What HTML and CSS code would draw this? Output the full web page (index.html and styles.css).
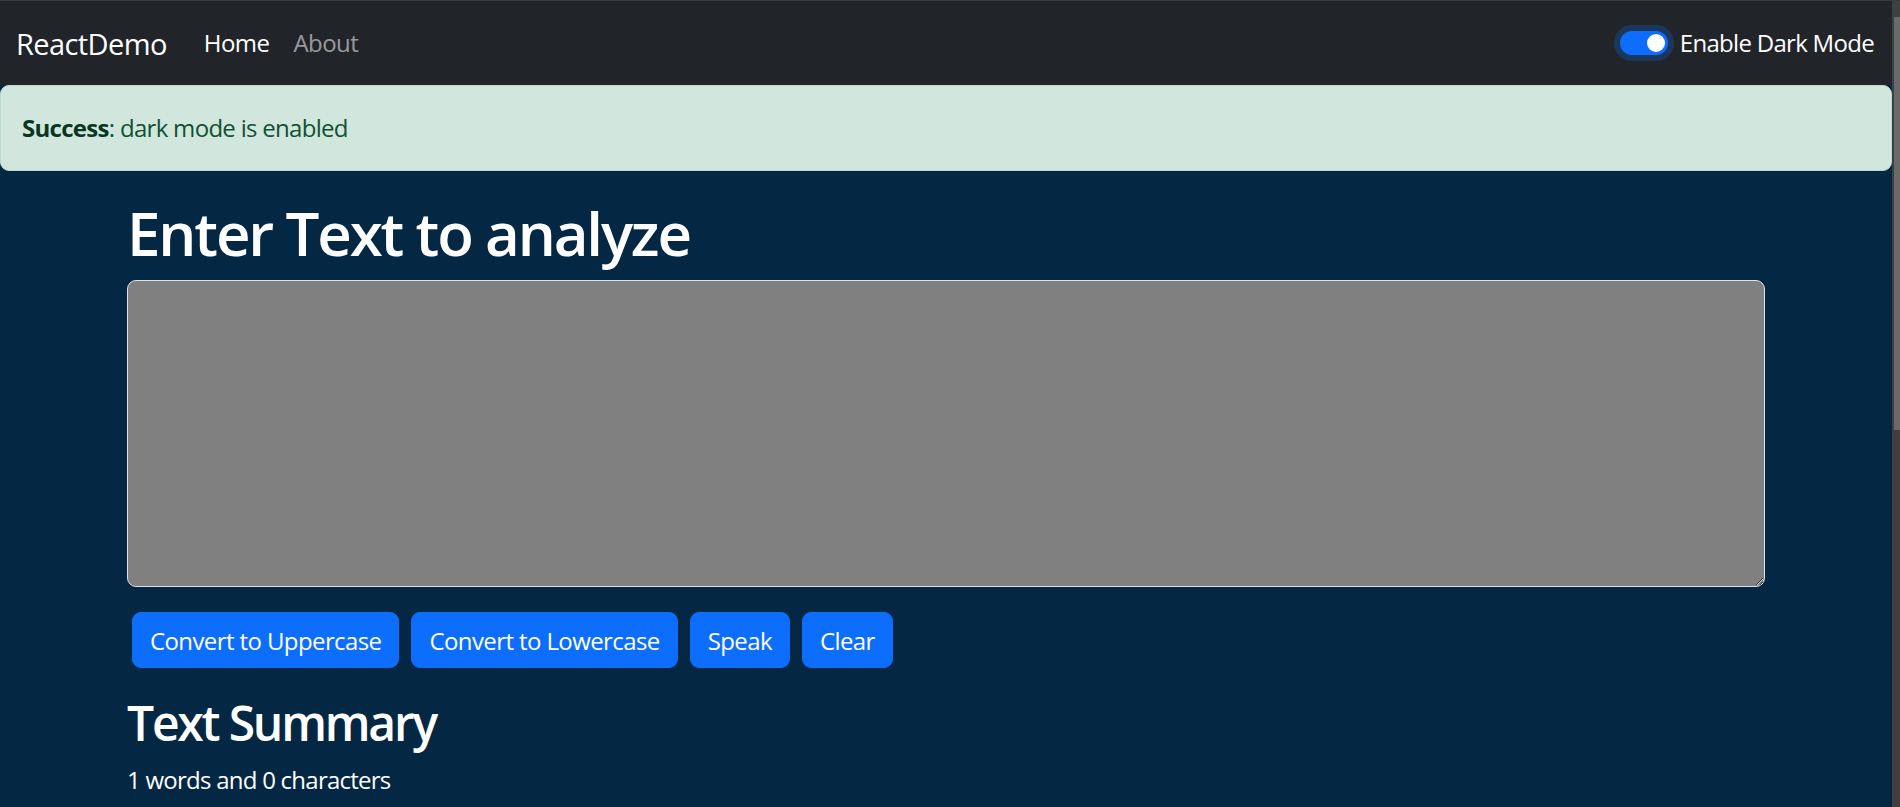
FILE: index.html
```html
<!DOCTYPE html>
<html lang="en">
<head>
<meta charset="utf-8">
<title>ReactDemo</title>
<link rel="stylesheet" href="styles.css">
</head>
<body>
<div class="page">
  <nav class="navbar">
    <a class="brand" href="#">ReactDemo</a>
    <ul class="nav-links">
      <li><a class="nav-link active" href="#">Home</a></li>
      <li><a class="nav-link" href="#">About</a></li>
    </ul>
    <label class="switch">
      <span class="switch-track"><span class="switch-knob"></span></span>
      <span class="switch-label">Enable Dark Mode</span>
    </label>
  </nav>
  <div class="alert"><strong>Success</strong>: dark mode is enabled</div>
  <div class="container main">
    <h1 class="title">Enter Text to analyze</h1>
    <textarea class="textbox" rows="8"></textarea>
    <div class="buttons">
      <button class="btn">Convert to Uppercase</button>
      <button class="btn">Convert to Lowercase</button>
      <button class="btn">Speak</button>
      <button class="btn">Clear</button>
    </div>
  </div>
  <div class="container summary">
    <h2 class="subtitle">Text Summary</h2>
    <p class="stats">1 words and 0 characters</p>
  </div>
</div>
<div class="scrollbar"><div class="scroll-arrow"></div><div class="scroll-thumb"></div></div>
</body>
</html>
```

FILE: styles.css
```css
html, body {
  margin: 0;
  height: 100%;
}
body {
  display: flex;
  background: #042743;
  font-family: "Open Sans", "Noto Sans", sans-serif;
  font-size: 24px;
  color: #fff;
  overflow: hidden;
  border-top: 1px solid #3a3a3a;
  box-sizing: border-box;
}
.page {
  flex: 1;
  min-width: 0;
}
.scrollbar {
  width: 8px;
  background: #3f3f3f;
  display: flex;
  flex-direction: column;
}
.scroll-arrow {
  height: 16px;
}
.scroll-thumb {
  height: 413px;
  margin-left: 2px;
  background: #6a6a6a;
}

/* navbar */
.navbar {
  display: flex;
  align-items: center;
  height: 84px;
  padding: 0 18px 0 16px;
  background: #212529;
  box-sizing: border-box;
}
.brand {
  font-size: 29px;
  color: #fff;
  text-decoration: none;
  margin-right: 25px;
  line-height: 45px;
  letter-spacing: -0.6px;
}
.nav-links {
  display: flex;
  list-style: none;
  margin: 0;
  padding: 0;
  flex: 1;
}
.nav-link {
  display: block;
  padding: 12px 12px;
  color: rgba(255, 255, 255, 0.55);
  text-decoration: none;
  line-height: 36px;
  letter-spacing: -0.55px;
}
.nav-link.active {
  color: #fff;
}
.switch {
  display: flex;
  align-items: center;
  gap: 12px;
}
.switch-track {
  width: 48px;
  height: 24px;
  border-radius: 12px;
  background: #0d6efd;
  box-shadow: 0 0 0 6px rgba(13, 110, 253, 0.25);
  display: flex;
  align-items: center;
  justify-content: flex-end;
  padding: 0 3px;
  box-sizing: border-box;
}
.switch-knob {
  width: 18px;
  height: 18px;
  border-radius: 50%;
  background: #fff;
}
.switch-label {
  line-height: 36px;
  letter-spacing: -0.7px;
}

/* alert */
.alert {
  padding: 24px 21px;
  background: #d1e7dd;
  border: 1px solid #badbcc;
  border-radius: 9px;
  color: #0f5132;
  line-height: 36px;
  letter-spacing: -0.7px;
}
.alert strong {
  color: #0a3622;
  font-weight: 700;
}

/* main */
.container {
  width: 1638px;
  margin: 0 auto;
}
.main {
  margin-top: 26px;
}
.title {
  margin: 0 0 11px;
  font-size: 60px;
  font-weight: 600;
  line-height: 72px;
  letter-spacing: -2.15px;
}
.textbox {
  display: block;
  width: 100%;
  height: 307px;
  box-sizing: border-box;
  margin: 0;
  padding: 9px 18px;
  background: #808080;
  color: #fff;
  border: 1px solid #dee2e6;
  border-radius: 9px;
  font-family: inherit;
  font-size: 24px;
}
.buttons {
  display: flex;
  gap: 12px;
  margin: 25px 5px 0;
}
.btn {
  height: 56px;
  padding: 0 17px;
  background: #0d6efd;
  border: 1px solid #0d6efd;
  border-radius: 9px;
  color: #fff;
  font-family: inherit;
  font-size: 24px;
  letter-spacing: -0.6px;
}
.summary {
  margin-top: 26px;
}
.subtitle {
  margin: 0 0 10px;
  font-size: 48px;
  font-weight: 600;
  line-height: 58px;
  letter-spacing: -2.2px;
}
.stats {
  margin: 0;
  line-height: 36px;
  letter-spacing: -0.75px;
}
```
